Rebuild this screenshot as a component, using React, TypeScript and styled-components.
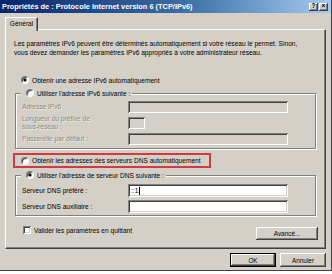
import React from 'react';
import styled, { createGlobalStyle } from 'styled-components';

const Global = createGlobalStyle`
  html, body { margin: 0; padding: 0; background: #ffffff; }
  body { font-family: "Liberation Sans", Arial, sans-serif; font-size: 6.6px; color: #000; }
  * { box-sizing: border-box; }
`;

const raised = `
  box-shadow: inset -1px -1px #404040, inset 1px 1px #ffffff, inset -2px -2px #808080, inset 2px 2px #d4d0c8;
`;
const sunken = `
  box-shadow: inset 1px 1px #808080, inset -1px -1px #ffffff, inset 2px 2px #404040, inset -2px -2px #d4d0c8;
`;

const Window = styled.div`
  width: 332px;
  height: 271px;
  background: #d4d0c8;
  border-right: 1px solid #404040;
  border-bottom: 1px solid #404040;
  display: flex;
  flex-direction: column;
`;

const TitleBar = styled.div`
  height: 13px;
  display: flex;
  align-items: center;
  justify-content: space-between;
  padding: 0 3px 0 2px;
  background: linear-gradient(to right, #0a246a 0%, #3a6ea5 55%, #a6caf0 100%);
`;

const Title = styled.span`
  color: #ffffff;
  font-weight: bold;
  font-size: 7.4px;
  white-space: nowrap;
`;

const TitleButtons = styled.div`
  display: flex;
  gap: 1px;
`;

const TitleButton = styled.div`
  width: 9px;
  height: 8px;
  background: #d4d0c8;
  ${raised}
  display: flex;
  align-items: center;
  justify-content: center;
  font-weight: bold;
  font-size: 6.5px;
  line-height: 1;
  color: #000;
`;

const Content = styled.div`
  flex: 1;
  display: flex;
  flex-direction: column;
  padding: 4px 5px 0 5px;
`;

const TabStrip = styled.div`
  display: flex;
  height: 12px;
`;

const Tab = styled.div`
  position: relative;
  z-index: 1;
  width: 33px;
  height: 14px;
  margin-bottom: -2px;
  background: #d4d0c8;
  border-top: 1px solid #ffffff;
  border-left: 1px solid #ffffff;
  border-right: 1px solid #404040;
  box-shadow: inset -1px 0 #808080;
  display: flex;
  justify-content: center;
  padding-top: 2px;
  font-size: 6.6px;
`;

const Panel = styled.div`
  height: 220px;
  background: #d4d0c8;
  border-top: 1px solid #ffffff;
  border-left: 1px solid #ffffff;
  border-right: 1px solid #404040;
  border-bottom: 1px solid #404040;
  box-shadow: inset -1px -1px #808080;
  display: flex;
  flex-direction: column;
  padding: 9px 9px 0 9px;
`;

const Description = styled.p`
  margin: 0 0 0 -1px;
  line-height: 9px;
`;

const OptionRow = styled.label<{ $indent?: number }>`
  display: flex;
  align-items: center;
  gap: 3px;
  height: 10px;
  margin-left: ${(p) => p.$indent ?? 6}px;
  white-space: nowrap;
`;

const Radio = styled.span<{ $checked?: boolean }>`
  width: 8px;
  height: 8px;
  border-radius: 50%;
  flex: none;
  background: ${(p) =>
    p.$checked
      ? 'radial-gradient(circle at 50% 50%, #000 0, #000 1.3px, #fff 1.8px)'
      : '#fff'};
  border: 1px solid;
  border-color: #808080 #ffffff #ffffff #808080;
  box-shadow: inset 1px 1px #404040;
`;

const Checkbox = styled.span`
  width: 8px;
  height: 8px;
  flex: none;
  background: #ffffff;
  ${sunken}
`;

const Group = styled.div<{ $top: number; $pb: number }>`
  margin-top: ${(p) => p.$top}px;
  border: 1px solid #808080;
  box-shadow: inset 1px 1px #ffffff, 1px 1px #ffffff;
  padding: 0 0 ${(p) => p.$pb}px 6px;
  display: flex;
  flex-direction: column;
`;

const Legend = styled.div`
  align-self: flex-start;
  margin: -6px 0 0 -1px;
  padding-right: 2px;
  background: #d4d0c8;
`;

const FieldGrid = styled.div<{ $rowH: number; $gap: number; $top: number }>`
  display: grid;
  grid-template-columns: 106px auto;
  grid-auto-rows: ${(p) => p.$rowH}px;
  row-gap: ${(p) => p.$gap}px;
  margin-top: ${(p) => p.$top}px;
  align-items: center;
`;

const FieldLabel = styled.span<{ $disabled?: boolean }>`
  line-height: 8px;
  color: ${(p) => (p.$disabled ? '#8c8a85' : '#000')};
  text-shadow: ${(p) => (p.$disabled ? '1px 1px 0 rgba(255,255,255,0.6)' : 'none')};
`;

const Input = styled.div<{ $w: number; $disabled?: boolean }>`
  width: ${(p) => p.$w}px;
  height: 100%;
  background: ${(p) => (p.$disabled ? '#d4d0c8' : '#ffffff')};
  ${sunken}
  display: flex;
  align-items: center;
  padding-left: 3px;
  font-size: 6.6px;
`;

const Caret = styled.span`
  display: inline-block;
  width: 1px;
  height: 8px;
  background: #000;
  margin-left: 1px;
`;

const Highlight = styled.div`
  margin: 4px 0 0 -2px;
  width: 198px;
  height: 15px;
  border: 2px solid #d23a3f;
  display: flex;
  align-items: center;
  padding-left: 6px;
`;

const BottomRow = styled.div`
  display: flex;
  justify-content: space-between;
  align-items: flex-start;
  margin-top: 9px;
  margin-right: -2px;
`;

const Button = styled.div<{ $w: number; $h: number; $default?: boolean; $mt?: number }>`
  width: ${(p) => p.$w}px;
  height: ${(p) => p.$h}px;
  margin-top: ${(p) => p.$mt ?? 0}px;
  background: #d4d0c8;
  ${(p) =>
    p.$default
      ? 'border: 1px solid #000; box-shadow: inset -1px -1px #404040, inset 1px 1px #ffffff, inset -2px -2px #808080;'
      : raised}
  display: flex;
  align-items: center;
  justify-content: center;
  font-size: 6.4px;
`;

const Footer = styled.div`
  display: flex;
  justify-content: flex-end;
  gap: 4px;
  padding-top: 4px;
`;

export default function App() {
  return (
    <>
      <Global />
      <Window>
        <TitleBar>
          <Title>Propriétés de : Protocole Internet version 6 (TCP/IPv6)</Title>
          <TitleButtons>
            <TitleButton>?</TitleButton>
            <TitleButton>×</TitleButton>
          </TitleButtons>
        </TitleBar>
        <Content>
          <TabStrip>
            <Tab>Général</Tab>
          </TabStrip>
          <Panel>
            <Description>
              Les paramètres IPv6 peuvent être déterminés automatiquement si votre réseau le permet. Sinon,
              <br />
              vous devez demander les paramètres IPv6 appropriés à votre administrateur réseau.
            </Description>
            <OptionRow style={{ marginTop: 18 }}>
              <Radio $checked />
              Obtenir une adresse IPv6 automatiquement
            </OptionRow>
            <Group $top={8} $pb={3}>
              <Legend>
                <OptionRow $indent={5}>
                  <Radio />
                  Utiliser l'adresse IPv6 suivante :
                </OptionRow>
              </Legend>
              <FieldGrid $rowH={12} $gap={4} $top={3}>
                <FieldLabel $disabled>Adresse IPv6 :</FieldLabel>
                <Input $w={160} $disabled />
                <FieldLabel $disabled>
                  Longueur du préfixe de
                  <br />
                  sous-réseau :
                </FieldLabel>
                <Input $w={17} $disabled />
                <FieldLabel $disabled>Passerelle par défaut :</FieldLabel>
                <Input $w={160} $disabled />
              </FieldGrid>
            </Group>
            <Highlight>
              <OptionRow $indent={0}>
                <Radio />
                Obtenir les adresses des serveurs DNS automatiquement
              </OptionRow>
            </Highlight>
            <Group $top={7} $pb={2}>
              <Legend>
                <OptionRow $indent={5}>
                  <Radio $checked />
                  Utiliser l'adresse de serveur DNS suivante :
                </OptionRow>
              </Legend>
              <FieldGrid $rowH={13} $gap={3} $top={4}>
                <FieldLabel>Serveur DNS préféré :</FieldLabel>
                <Input $w={160}>
                  ::1
                  <Caret />
                </Input>
                <FieldLabel>Serveur DNS auxiliaire :</FieldLabel>
                <Input $w={160} />
              </FieldGrid>
            </Group>
            <BottomRow>
              <OptionRow $indent={8}>
                <Checkbox />
                Valider les paramètres en quittant
              </OptionRow>
              <Button $w={62} $h={13} $mt={2}>
                Avancé...
              </Button>
            </BottomRow>
          </Panel>
          <Footer>
            <Button $w={46} $h={14} $default>
              OK
            </Button>
            <Button $w={46} $h={14}>
              Annuler
            </Button>
          </Footer>
        </Content>
      </Window>
    </>
  );
}
